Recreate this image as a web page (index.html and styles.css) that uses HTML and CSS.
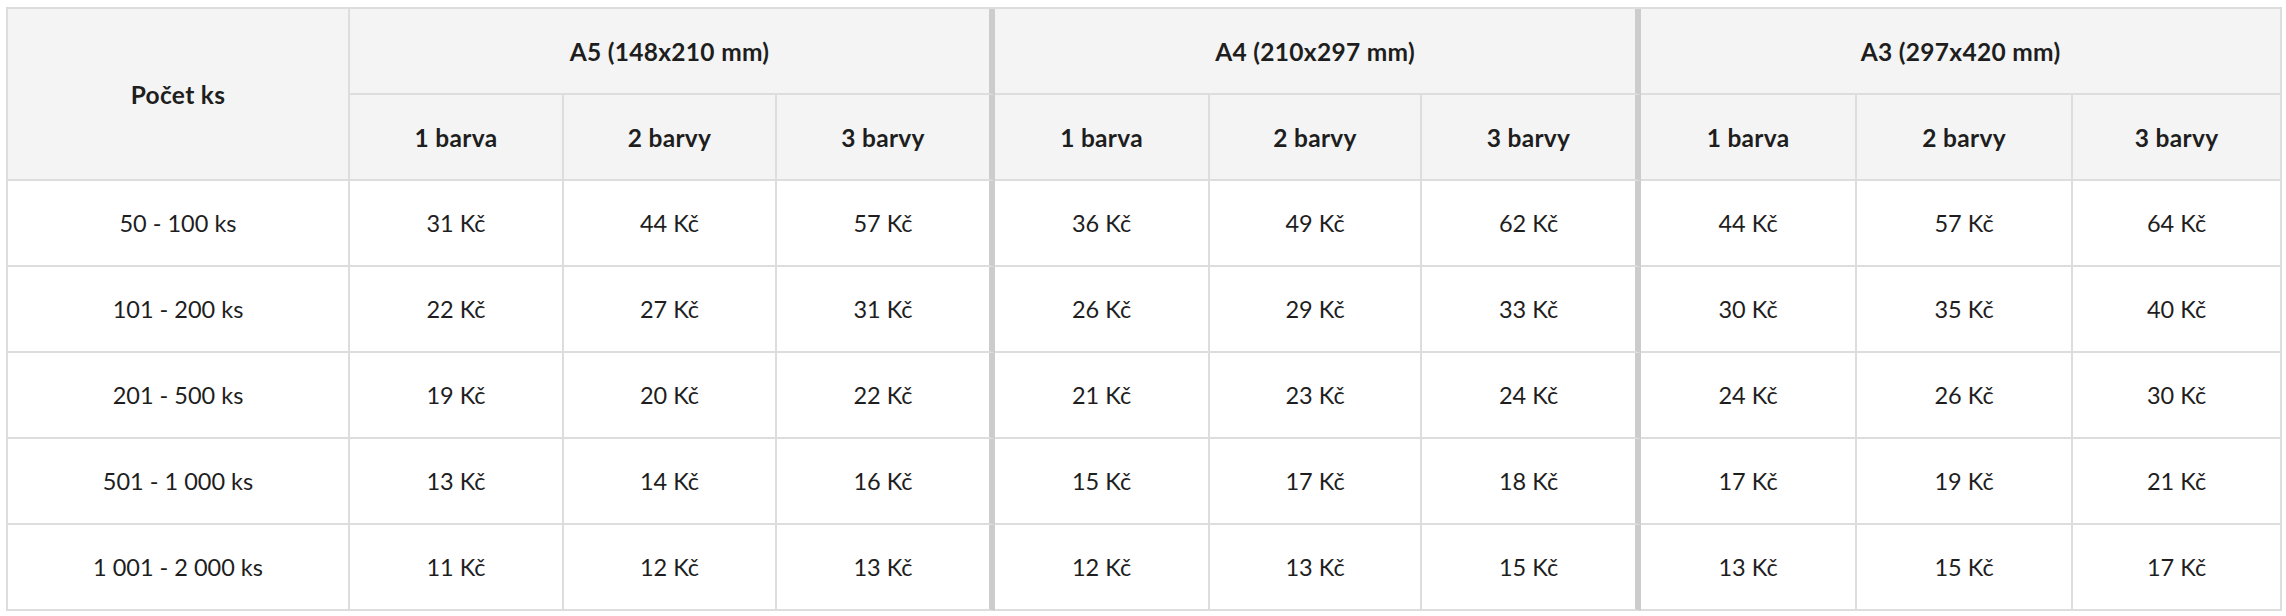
FILE: index.html
```html
<!DOCTYPE html>
<html lang="cs">
<head>
<meta charset="utf-8">
<title>Ceník</title>
<link rel="stylesheet" href="styles.css">
</head>
<body>
<table class="price-table">
  <colgroup>
    <col class="c-qty">
    <col class="c-a">
    <col class="c-b">
    <col class="c-c">
    <col class="c-d">
    <col class="c-e">
    <col class="c-f">
    <col class="c-g">
    <col class="c-h">
    <col class="c-i">
  </colgroup>
  <thead>
    <tr>
      <th rowspan="2" class="qty-head">Počet ks</th>
      <th colspan="3" class="grp-end">A5 (148x210 mm)</th>
      <th colspan="3" class="grp-end">A4 (210x297 mm)</th>
      <th colspan="3">A3 (297x420 mm)</th>
    </tr>
    <tr>
      <th>1 barva</th><th>2 barvy</th><th class="grp-end">3 barvy</th>
      <th>1 barva</th><th>2 barvy</th><th class="grp-end">3 barvy</th>
      <th>1 barva</th><th>2 barvy</th><th>3 barvy</th>
    </tr>
  </thead>
  <tbody>
    <tr>
      <td>50 - 100 ks</td>
      <td>31 Kč</td><td>44 Kč</td><td class="grp-end">57 Kč</td>
      <td>36 Kč</td><td>49 Kč</td><td class="grp-end">62 Kč</td>
      <td>44 Kč</td><td>57 Kč</td><td>64 Kč</td>
    </tr>
    <tr>
      <td>101 - 200 ks</td>
      <td>22 Kč</td><td>27 Kč</td><td class="grp-end">31 Kč</td>
      <td>26 Kč</td><td>29 Kč</td><td class="grp-end">33 Kč</td>
      <td>30 Kč</td><td>35 Kč</td><td>40 Kč</td>
    </tr>
    <tr>
      <td>201 - 500 ks</td>
      <td>19 Kč</td><td>20 Kč</td><td class="grp-end">22 Kč</td>
      <td>21 Kč</td><td>23 Kč</td><td class="grp-end">24 Kč</td>
      <td>24 Kč</td><td>26 Kč</td><td>30 Kč</td>
    </tr>
    <tr>
      <td>501 - 1 000 ks</td>
      <td>13 Kč</td><td>14 Kč</td><td class="grp-end">16 Kč</td>
      <td>15 Kč</td><td>17 Kč</td><td class="grp-end">18 Kč</td>
      <td>17 Kč</td><td>19 Kč</td><td>21 Kč</td>
    </tr>
    <tr>
      <td>1 001 - 2 000 ks</td>
      <td>11 Kč</td><td>12 Kč</td><td class="grp-end">13 Kč</td>
      <td>12 Kč</td><td>13 Kč</td><td class="grp-end">15 Kč</td>
      <td>13 Kč</td><td>15 Kč</td><td>17 Kč</td>
    </tr>
  </tbody>
</table>
</body>
</html>
```

FILE: styles.css
```css
html, body {
  margin: 0;
  padding: 0;
  background: #ffffff;
}

body {
  padding: 7px 0 0 6px;
  font-family: Lato, "Open Sans", "DejaVu Sans", sans-serif;
  color: #1e1e1e;
}

.price-table {
  table-layout: fixed;
  border-collapse: separate;
  border-spacing: 0;
  width: 2276px;
  border-top: 2px solid #dddddd;
  border-left: 2px solid #dddddd;
  font-size: 23.5px;
}

.c-qty { width: 342px; }
.c-a { width: 214px; }
.c-b { width: 213px; }
.c-c { width: 218px; }
.c-d { width: 215px; }
.c-e { width: 212px; }
.c-f { width: 219px; }
.c-g { width: 216px; }
.c-h { width: 216px; }
.c-i { width: 209px; }

.price-table th,
.price-table td {
  box-sizing: border-box;
  height: 86px;
  padding: 0;
  text-align: center;
  vertical-align: middle;
  border-right: 2px solid #dddddd;
  border-bottom: 2px solid #dddddd;
  white-space: nowrap;
}

.price-table th {
  background: #f4f4f4;
  font-weight: 700;
  font-size: 24.5px;
  letter-spacing: 0.3px;
}

.price-table td {
  font-weight: 400;
  background: #ffffff;
}

.price-table .grp-end {
  border-right: 6px solid #cccccc;
}
```
